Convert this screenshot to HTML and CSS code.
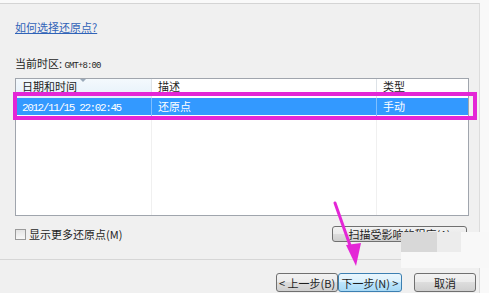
FILE: index.html
```html
<!DOCTYPE html>
<html lang="zh-CN">
<head>
    <meta charset="UTF-8">
    <title>系统还原</title>
    <link rel="stylesheet" href="styles.css">
</head>
<body>
    <div class="dialog">
        <div class="content">
            <a href="#" class="help-link">如何选择还原点?</a>
            <div class="timezone">当前时区: <span class="mono">GMT+8:00</span></div>

            <div class="list">
                <div class="row head">
                    <div class="cell sorted">日期和时间<span class="sort-arrow"></span></div>
                    <div class="cell">描述</div>
                    <div class="cell">类型</div>
                </div>
                <div class="row selected">
                    <div class="cell"><span class="date">2012/11/15 22:02:45</span></div>
                    <div class="cell">还原点</div>
                    <div class="cell">手动</div>
                </div>
                <div class="row filler">
                    <div class="cell"></div>
                    <div class="cell"></div>
                    <div class="cell"></div>
                </div>
            </div>

            <div class="options">
                <label class="check"><span class="box"></span>显示更多还原点(M)</label>
                <button class="btn scan">扫描受影响的程序(A)</button>
            </div>
        </div>

        <div class="footer">
            <button class="btn nav">&lt; 上一步(B)</button>
            <button class="btn nav focus">下一步(N) &gt;</button>
            <button class="btn cancel">取消</button>
        </div>
    </div>

    <!-- annotations drawn over the screenshot -->
    <div class="highlight"></div>
    <svg class="arrow" width="40" height="70" viewBox="0 0 40 70">
        <path d="M4 2 L21 50" stroke="#e426d6" stroke-width="3" fill="none" stroke-linecap="round"/>
        <polygon points="15,44 30,42 25,65" fill="#e426d6"/>
    </svg>
    <div class="watermark"><span class="wm-a"></span><span class="wm-b"></span></div>
</body>
</html>
```

FILE: styles.css
```css
body {
    margin: 0; padding: 0; background: #f9f9f9;
    font-family: "Noto Sans CJK SC", "Liberation Sans", sans-serif; font-size: 11px; color: #1e1e1e;
}
.dialog {
    margin-top: 3px; width: 479px; height: 289px; background: #f0f0f0;
    border-top: 1px solid #d4d4d4; border-right: 1px solid #dcdcdc;
}
.content {
    height: 255px; padding: 0 11px 0 15px; box-sizing: border-box;
}
.help-link {
    display: inline-block; margin-top: 15px; line-height: 16px; color: #3063b8; text-decoration: underline;
}
.timezone { margin-top: 20px; line-height: 16px; }
.mono { font-family: "Liberation Mono", monospace; font-size: 9px; letter-spacing: -0.9px; }

/* List view */
.list {
    margin-top: 4px; width: 454px; height: 138px; box-sizing: border-box;
    border: 1px solid #a0a5ad; background: #fff; display: flex; flex-direction: column;
}
.row { display: grid; grid-template-columns: 136px 225px 1fr; }
.cell { padding-left: 6px; line-height: 17px; white-space: nowrap; border-right: 1px solid #f0f0f0; }
.cell:last-child { border-right: none; }
.head { height: 19px; }
.head .cell { border-right-color: #dde2e7; position: relative; line-height: 15px; }
.head .sorted { background: linear-gradient(#f4f9fd, #e5f1fa); }
.sort-arrow {
    position: absolute; left: 64px; top: 0; width: 0; height: 0;
    border-left: 3px solid transparent; border-right: 3px solid transparent; border-top: 3px solid #9aa9b9;
}
.selected { background: #3399ff; color: #fff; height: 17px; }
.selected .cell { border-right-color: #7fbfff; }
.date { font-family: "Liberation Mono", monospace; font-size: 11px; letter-spacing: -1.4px; }
.filler { flex: 1; margin-top: 3px; }

/* Checkbox + scan */
.options {
    margin-top: 10px; display: flex; justify-content: space-between; align-items: center; width: 452px;
}
.check { display: flex; align-items: center; gap: 3px; line-height: 16px; }
.box {
    width: 9px; height: 9px; border: 1px solid #9a9a9a; background: linear-gradient(#e4e4e4, #f8f8f8);
}

.btn {
    font-family: "Noto Sans CJK SC", "Liberation Sans", sans-serif; font-size: 11px; color: #1e1e1e;
    border: 1px solid #707070; border-radius: 3px; padding: 0; line-height: 14px;
    background: linear-gradient(#f2f2f2 0%, #ebebeb 49%, #dddddd 50%, #cfcfcf 100%);
}
.scan { width: 135px; height: 16px; }

/* Footer */
.footer {
    border-top: 1px solid #d6d6d6; height: 34px; box-sizing: border-box;
    display: flex; justify-content: flex-end; align-items: flex-start; padding: 13px 3px 0 0;
}
.nav { width: 62px; height: 19px; }
.focus { width: 64px; border-color: #3c7fb1; background: linear-gradient(#eaf6fd 0%, #d9f0fc 49%, #bee6fd 50%, #a7d9f5 100%); }
.cancel { width: 62px; height: 19px; margin-left: 12px; }

/* Annotations */
.highlight {
    position: absolute; left: 13px; top: 92px; width: 456px; height: 20px; border: 4px solid #e426d6;
}
.arrow { position: absolute; left: 331px; top: 201px; }
.watermark {
    position: absolute; left: 401px; top: 232px; width: 88px; height: 36px; background: #f8f8f8; display: flex;
}
.wm-a { width: 36px; height: 20px; background: #d8d8d8; }
.wm-b { width: 24px; height: 20px; background: #ececec; }
```
